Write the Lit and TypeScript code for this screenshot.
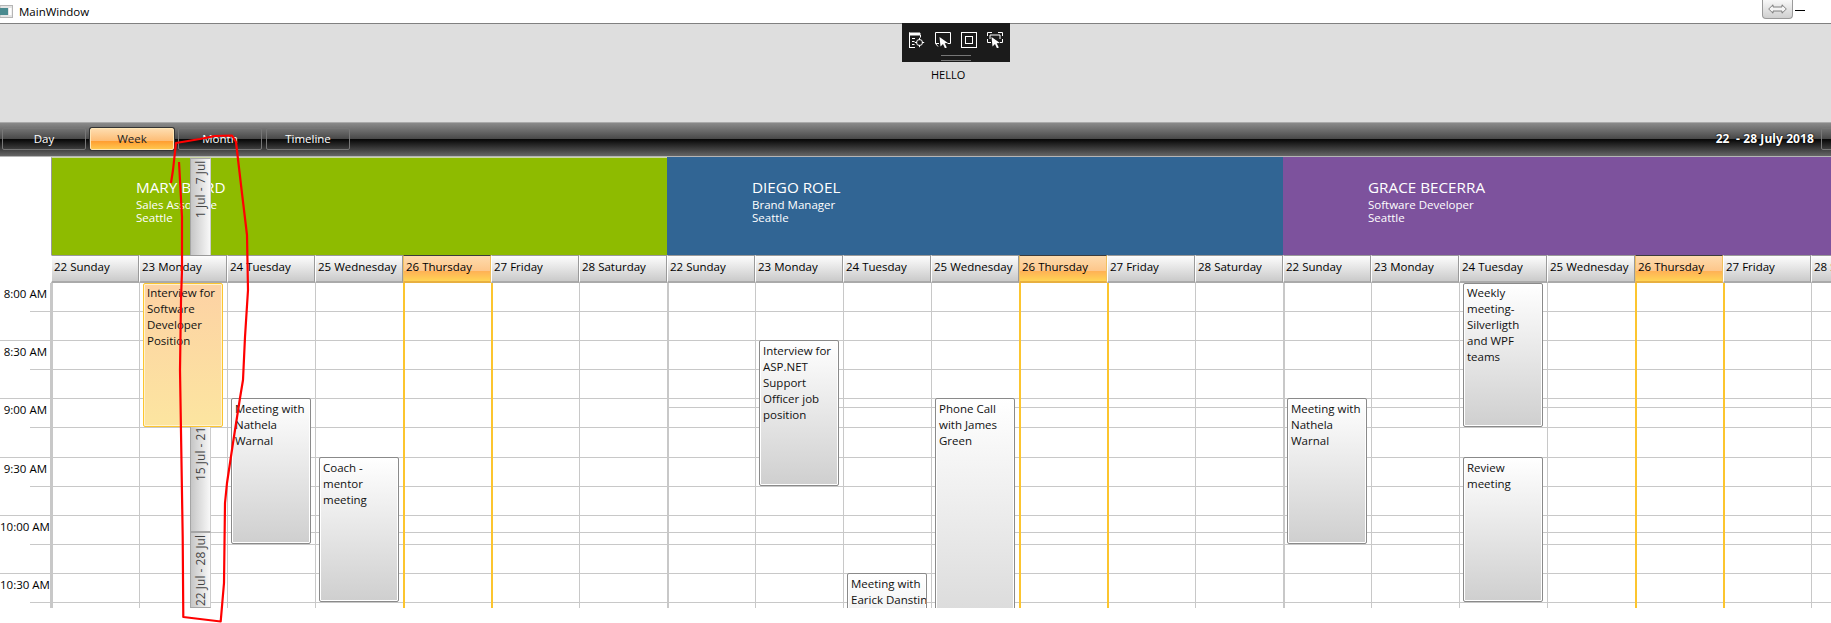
import { LitElement, html, css, svg } from "lit";
import { customElement } from "lit/decorators.js";

interface Ev { day: number; top: number; h: number; lines: string[]; selected?: boolean; tight?: boolean }
interface Res { name: string; sub: string; color: string; extra: number[]; events: Ev[]; cls: string; mark?: boolean }

const DAYS = ["22 Sunday", "23 Monday", "24 Tuesday", "25 Wednesday", "26 Thursday", "27 Friday", "28 Saturday"];
const LINES = [29, 58, 87, 116, 145, 175, 204, 233, 262, 291, 320];
const TIMES = ["8:00 AM", "8:30 AM", "9:00 AM", "9:30 AM", "10:00 AM", "10:30 AM"];

const RES: Res[] = [
  {
    name: "MARY BAIRD", sub: "Sales Associate", color: "#8ebb00", cls: "first", extra: [], mark: true,
    events: [
      { day: 1, top: 0, h: 144, lines: ["Interview for", "Software", "Developer", "Position"], selected: true, tight: true },
      { day: 2, top: 115, h: 146, lines: ["Meeting with", "Nathela", "Warnal"] },
      { day: 3, top: 174, h: 145, lines: ["Coach -", "mentor", "meeting"] },
    ],
  },
  {
    name: "DIEGO ROEL", sub: "Brand Manager", color: "#316594", cls: "", extra: [125, 250],
    events: [
      { day: 1, top: 57, h: 146, lines: ["Interview for", "ASP.NET", "Support", "Officer job", "position"] },
      { day: 2, top: 290, h: 146, lines: ["Meeting with", "Earick Danstin"] },
      { day: 3, top: 115, h: 292, lines: ["Phone Call", "with James", "Green"] },
    ],
  },
  {
    name: "GRACE BECERRA", sub: "Software Developer", color: "#7d529d", cls: "", extra: [125, 250],
    events: [
      { day: 0, top: 115, h: 146, lines: ["Meeting with", "Nathela", "Warnal"] },
      { day: 2, top: 0, h: 144, lines: ["Weekly", "meeting-", "Silverligth", "and WPF", "teams"], tight: true },
      { day: 2, top: 174, h: 145, lines: ["Review", "meeting"] },
    ],
  },
];

const CURSOR = "M4.5 5 13 11 9.7 11.3 11.8 15.6 10 16.4 8 12 5.5 14.5Z";
const ICONS = [
  svg`<path d="M.5 16V.5" /><path d="M0 1h11v2H0" fill="#fff" /><path d="M.5 15.5H6M11.5 3v2.5M3 6.5h3M3 9.5h2.5M3 12.5h2.5" /><circle cx="10.5" cy="10.5" r="3" /><path d="M10.5 5.8v2.4M10.5 12.8v2.4M5.8 10.5h2.4M12.8 10.5h2.4" />`,
  svg`<path d="M4 11.5H.5V.5h15v11h-3M.5 11.5l2.5 3" /><path d="${CURSOR}" fill="#fff" stroke="none" />`,
  svg`<rect x=".5" y=".5" width="15" height="15" /><rect x="4.5" y="4.5" width="7" height="7" />`,
  svg`<path d="M.5 4V.5H5M11 .5h4.5V4M.5 7v3.500H4M15.500 7v3.500H13M3 7V3h10v4" /><path d="${CURSOR}" fill="#fff" stroke="none" />`,
];

const SCRIBBLE =
  "M171 183 L173 170 L176 143 L200 139 L215 136 L232 135.500 L236 142 L241 185 L247 235 L248 290 L245 337 L243 380 L240 398 L233 443 L227 483 L225 503 L224 583 L220.700 621.500 L183.300 617 L182.700 537 L180 370 L181 300 L182 270 L182 217 L179 162";

@customElement("app-root")
export class AppRoot extends LitElement {
  static styles = css`
    :host {
      display: block; width: 1831px; height: 623px; position: relative; overflow: hidden;
      background: #fff; color: #000;
      font-family: "Open Sans", "Noto Sans", sans-serif; font-size: 11.5px;
    }
    .title { height: 24px; box-sizing: border-box; border-bottom: 1px solid #808080; display: flex; align-items: center; }
    .win-icon { width: 13px; height: 13px; flex: none; margin-right: 6px; }
    .title-text { line-height: 23px; flex: 1; }
    .title-btn {
      width: 31px; height: 19px; box-sizing: border-box; align-self: flex-start; flex: none;
      border: 1px solid #9a9a9a; border-top: none; border-radius: 0 0 4px 4px;
      background: linear-gradient(#f8f8f8, #cfcfcf); display: flex; align-items: center; justify-content: center;
    }
    .title-min { width: 10px; height: 1px; background: #000; margin: 0 26px 0 2px; align-self: flex-start; margin-top: 10px; flex: none; }
    .grey { height: 98px; background: #dedede; padding: 43px 0 0 931px; box-sizing: border-box; line-height: 16px; position: relative; font-size: 11px; }
    .float {
      position: absolute; left: 902px; top: -1px; width: 108px; height: 39px; background: #1b1b1b;
      display: flex; flex-direction: column; align-items: center;
    }
    .float-icons { display: flex; gap: 10px; margin-top: 9px; }
    .float-icons svg { width: 16px; height: 16px; fill: none; stroke: #fff; stroke-width: 1; display: block; }
    .grip { width: 30px; height: 4px; margin-top: 7px; border-top: 1px solid #777; border-bottom: 1px solid #777; }
    .bar {
      height: 35px; box-sizing: border-box; border-top: 1px solid #aaa; border-bottom: 1px solid #b5b5b5;
      background: linear-gradient(#8a8a8a 0, #474747 49%, #080808 50%, #666 100%);
      display: flex; align-items: center; gap: 4px; padding-left: 2px; padding-bottom: 2px; color: #fff;
    }
    .btn {
      width: 84px; height: 22px; flex: none; box-sizing: border-box; border: 1px solid #777; border-radius: 2px;
      text-align: center; line-height: 20px;
    }
    .btn.on {
      color: #222; border-color: #ffe6b5; box-shadow: 0 0 0 1px #333;
      background: linear-gradient(#fedcae 0, #fdbd76 58%, #ff9c30 60%, #ffc64e 100%);
    }
    .date {
      margin-left: auto; margin-right: 3px; font-weight: 700; font-size: 12px; letter-spacing: 0.1px;
      text-shadow: 0 0 2px #000, 0 0 1px #000; white-space: pre; font-family: "Noto Sans", sans-serif;
    }
    .peek { width: 10px; flex: none; overflow: hidden; }
    .resources { display: flex; height: 98px; padding-left: 51px; }
    .res { width: 616px; flex: none; box-sizing: border-box; color: #fff; padding: 20px 0 0 85px; overflow: hidden; }
    .res.first { border-top: 1px solid #cdd7a6; border-left: 1px solid #999; padding: 19px 0 0 84px; }
    .res-name { font-size: 15.25px; line-height: 21px; }
    .res-sub { line-height: 13px; }
    .days { display: flex; padding-left: 51px; height: 28px; position: relative; z-index: 2; background: #fff; }
    .day {
      width: 88px; flex: none; box-sizing: border-box; border: 1px solid #9a9a9a; border-left: 1px solid #fff; border-width: 1px 1px 2px 1px;
      border-top-color: #9a9a9a; border-bottom-color: #aaa;
      background: linear-gradient(#fdfdfd, #cacaca); line-height: 22px; padding-left: 2px; white-space: nowrap; overflow: hidden;
    }
    .day.today {
      border-color: #3c3c3c #f0c060 #e8b040 #f0c060;
      background: linear-gradient(#fedbad 0, #fdc78b 58%, #ffb055 60%, #ffd455 100%);
    }
    .sched { display: flex; height: 325px; overflow: hidden; }
    .times { width: 51px; flex: none; box-sizing: border-box; border-right: 1px solid #c8c8c8; display: flex; flex-direction: column; }
    .t-row { box-sizing: border-box; flex: none; display: flex; flex-direction: column; justify-content: space-between; }
    .t-label { text-align: right; padding: 3px 3px 0 0; line-height: 16px; white-space: nowrap; }
    .tick { height: 1px; background: #c8c8c8; flex: none; margin-top: auto; }
    .tick.short { margin-left: 30px; }
    .res-grid { width: 616px; flex: none; display: grid; position: relative; }
    .rows, .cols { grid-area: 1 / 1; min-width: 0; }
    .row { box-sizing: border-box; border-bottom: 1px solid #c8c8c8; }
    .mark { position: absolute; left: 160px; right: 0; top: 249px; height: 1px; background: #c8c8c8; }
    .cols { display: flex; }
    .col { width: 88px; flex: none; box-sizing: border-box; border-left: 1px solid #c8c8c8; position: relative; }
    .col.start { border-left-width: 2px; }
    .col.today, .col.after { border-left: 2px solid #fcc52f; }
    .ev {
      position: absolute; left: 3px; width: 80px; box-sizing: border-box; z-index: 3;
      border: 1px solid #8a8a8a; border-radius: 2px; box-shadow: inset 0 0 0 1px #fff;
      background: linear-gradient(#fff, #cfcfcf); padding: 2px 0 0 3px; line-height: 16px; color: #111;
      white-space: nowrap; overflow: hidden;
    }
    .ev.tight { padding-top: 1px; }
    .col.start .ev { left: 2px; }
    .ev.sel { border-color: #fcc52f; box-shadow: inset 0 0 0 1px #fff2cf; background: linear-gradient(#fdd2a4, #fce5a0); }
    .strips {
      position: absolute; left: 190px; top: 158px; width: 21px; height: 450px; overflow: hidden; z-index: 1;
      display: flex; flex-direction: column;
    }
    .strip {
      flex: none; box-sizing: border-box; border: 1px solid #a5a5a5; border-left-color: #ccc;
      background: linear-gradient(90deg, #f8f8f8, #c6c6c6);
      writing-mode: vertical-rl; transform: rotate(180deg); text-align: right; color: #444;
      font-size: 12px; line-height: 19px; padding-bottom: 2px; white-space: nowrap;
    }
    .scribble { position: absolute; left: 0; top: 0; width: 1831px; height: 623px; z-index: 10; pointer-events: none; }
  `;

  private rowHeights(extra: number[]) {
    const all = [...LINES, ...extra].sort((a, b) => a - b);
    const out: number[] = [];
    let prev = 0;
    for (const l of all) { out.push(l - prev); prev = l; }
    return out;
  }

  private renderTimes() {
    let prev = 0;
    return LINES.map((l, i) => {
      const h = l - prev;
      prev = l;
      return html`<div class="t-row" style="height:${h}px">
        ${i % 2 === 0 ? html`<div class="t-label">${TIMES[i / 2]}</div>` : ""}
        <div class="tick ${i % 2 === 0 ? "short" : ""}"></div>
      </div>`;
    });
  }

  render() {
    return html`
      <div class="title">
        <svg class="win-icon" viewBox="0 0 13 13">
          <rect x="0" y=".5" width="12.500" height="12" fill="#e4e4e4" stroke="#b5b5b5" />
          <rect x="0" y="3" width="8" height="7" fill="#4a8a8f" />
          <rect x="9" y="3" width="2.500" height="7" fill="#fff" />
        </svg>
        <div class="title-text">MainWindow</div>
        <div class="title-btn">
          <svg width="19" height="10" viewBox="0 0 19 10">
            <path d="M.7 5 5 .8V3h9V.8L18.300 5 14 9.200V7H5v2.200Z" fill="#f4f4f4" stroke="#666" stroke-width=".8" />
          </svg>
        </div>
        <div class="title-min"></div>
      </div>
      <div class="grey">
        <div class="float">
          <div class="float-icons">${ICONS.map((i) => html`<svg viewBox="0 0 16 16">${i}</svg>`)}</div>
          <div class="grip"></div>
        </div>
        HELLO
      </div>
      <div class="bar">
        <div class="btn">Day</div>
        <div class="btn on">Week</div>
        <div class="btn">Month</div>
        <div class="btn">Timeline</div>
        <div class="date">22  - 28 July 2018</div>
        <div class="peek"><div class="btn"></div></div>
      </div>
      <div class="resources">
        ${RES.map((r) => html`<div class="res ${r.cls}" style="background:${r.color}">
          <div class="res-name">${r.name}</div>
          <div class="res-sub">${r.sub}</div>
          <div class="res-sub">Seattle</div>
        </div>`)}
      </div>
      <div class="days">
        ${RES.map(() => DAYS.map((d, i) => html`<div class="day ${i === 4 ? "today" : ""}">${d}</div>`))}
      </div>
      <div class="sched">
        <div class="times">${this.renderTimes()}</div>
        ${RES.map((r) => html`<div class="res-grid">
          <div class="rows">
            ${this.rowHeights(r.extra).map((h) => html`<div class="row" style="height:${h}px"></div>`)}
          </div>
          ${r.mark ? html`<div class="mark"></div>` : ""}
          <div class="cols">
            ${DAYS.map((_, i) => html`<div class="col ${i === 0 ? "start" : ""} ${i === 4 ? "today" : ""} ${i === 5 ? "after" : ""}">
              ${r.events.filter((e) => e.day === i).map((e) => html`<div class="ev ${e.selected ? "sel" : ""} ${e.tight ? "tight" : ""}" style="top:${e.top}px;height:${e.h}px">${e.lines.map((l) => html`<div>${l}</div>`)}</div>`)}
            </div>`)}
          </div>
        </div>`)}
      </div>
      <div class="strips">
        <div class="strip" style="height:125px">1 Jul - 7 Jul</div>
        <div class="strip" style="height:124px">8 Jul - 14 Jul</div>
        <div class="strip" style="height:125px">15 Jul - 21 Jul</div>
        <div class="strip" style="height:76px">22 Jul - 28 Jul</div>
      </div>
      <svg class="scribble" viewBox="0 0 1831 623">
        <path d="${SCRIBBLE}" fill="none" stroke="#f00" stroke-width="2.200" stroke-linejoin="round" />
      </svg>
    `;
  }
}
